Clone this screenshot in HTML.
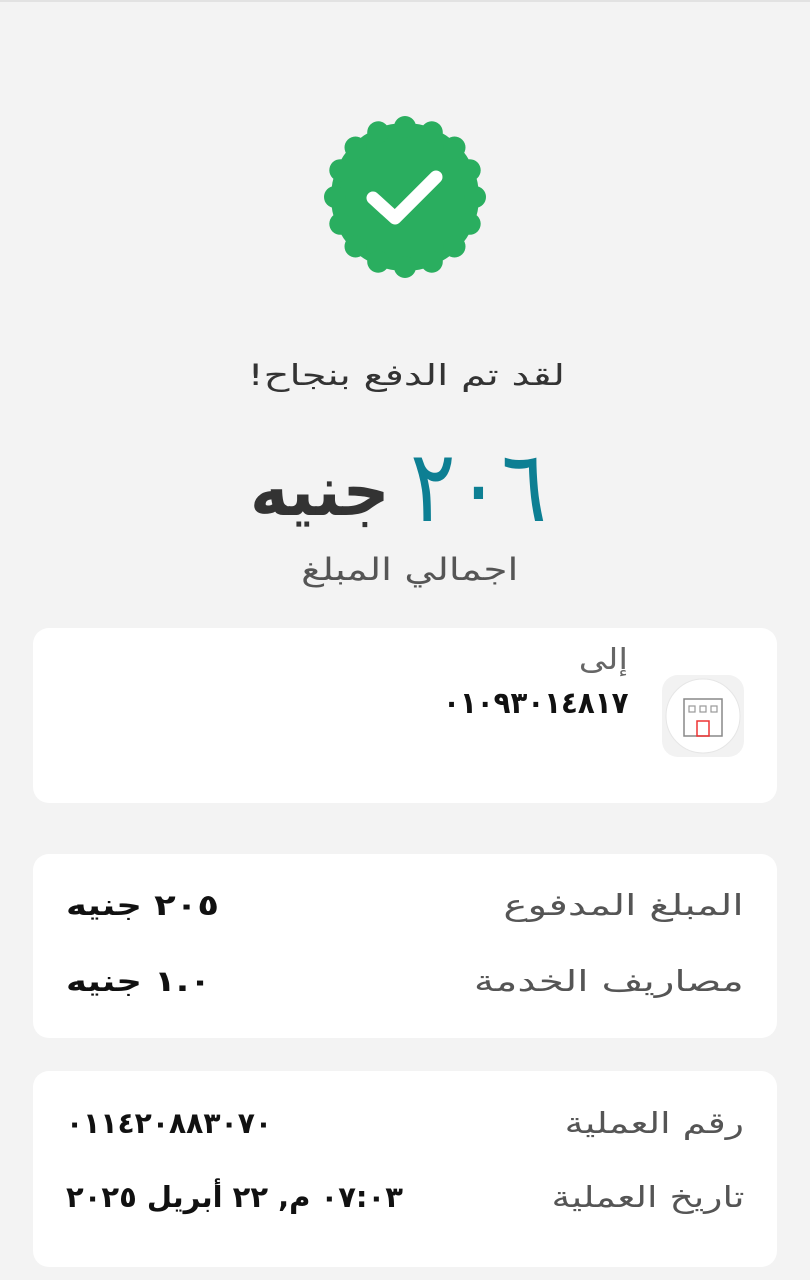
<!DOCTYPE html>
<html><head><meta charset="utf-8"><style>
body{margin:0;width:810px;height:1280px;background:#f3f3f3;font-family:"DejaVu Sans","Liberation Sans",sans-serif;position:relative;overflow:hidden;border-top:2px solid #e2e2e2;box-sizing:border-box}
.a{position:absolute;white-space:nowrap;direction:rtl}
.card{position:absolute;left:33px;width:744px;background:#fff;border-radius:16px}
.lbl{color:#555;font-size:29px;transform:scaleX(1.4);transform-origin:right center}
.val{color:#111;font-size:29px;font-weight:bold;transform:scaleX(1.22);transform-origin:left center}
</style></head><body>
<svg class="a" style="left:320px;top:110px" width="170" height="170" viewBox="0 0 170 170">
<g fill="#2aae5f">
<circle cx="85" cy="85" r="74"/>
<circle cx="85" cy="15" r="11"/><circle cx="111.8" cy="20.3" r="11"/><circle cx="134.5" cy="35.5" r="11"/><circle cx="149.7" cy="58.2" r="11"/><circle cx="155" cy="85" r="11"/><circle cx="149.7" cy="111.8" r="11"/><circle cx="134.5" cy="134.5" r="11"/><circle cx="111.8" cy="149.7" r="11"/><circle cx="85" cy="155" r="11"/><circle cx="58.2" cy="149.7" r="11"/><circle cx="35.5" cy="134.5" r="11"/><circle cx="20.3" cy="111.8" r="11"/><circle cx="15" cy="85" r="11"/><circle cx="20.3" cy="58.2" r="11"/><circle cx="35.5" cy="35.5" r="11"/><circle cx="58.2" cy="20.3" r="11"/>
</g>
<polyline points="53,86 75,106 116,65" fill="none" stroke="#fff" stroke-width="13" stroke-linecap="round" stroke-linejoin="round"/>
</svg>
<div class="a" style="right:245px;top:356px;font-size:29px;color:#333;transform:scaleX(1.38);transform-origin:right center">لقد تم الدفع بنجاح!</div>
<div class="a" style="left:250px;top:448px;font-size:70px;font-weight:bold;color:#333;transform:scaleX(0.93);transform-origin:left center">جنيه</div>
<div class="a" style="left:410px;top:430px;font-size:100px;color:#0d7f93;line-height:1.1;transform:scaleX(0.85);transform-origin:left center">٢٠٦</div>
<div class="a" style="right:292px;top:550px;font-size:31px;color:#555;transform:scaleX(1.26);transform-origin:right center">اجمالي المبلغ</div>

<div class="card" style="top:626px;height:175px"></div>
<div class="a" style="right:182px;top:640px;font-size:29px;color:#666;transform:scaleX(1.2);transform-origin:right center">إلى</div>
<div class="a" style="right:182px;top:684px;font-size:30px;font-weight:bold;color:#111;transform:scaleX(0.92);transform-origin:right center">٠١٠٩٣٠١٤٨١٧</div>
<div class="a" style="left:662px;top:673px;width:82px;height:82px;background:#f2f2f2;border-radius:16px"></div>
<svg class="a" style="left:664px;top:675px" width="78" height="78" viewBox="0 0 78 78">
<circle cx="39" cy="39" r="37" fill="#fff" stroke="#e6e6e6"/>
<rect x="20" y="22" width="38" height="37" fill="none" stroke="#888" stroke-width="1.5"/>
<rect x="25" y="29" width="6" height="6" fill="none" stroke="#999" stroke-width="1.2"/>
<rect x="36" y="29" width="6" height="6" fill="none" stroke="#999" stroke-width="1.2"/>
<rect x="47" y="29" width="6" height="6" fill="none" stroke="#999" stroke-width="1.2"/>
<rect x="33" y="44" width="12" height="15" fill="none" stroke="#e33" stroke-width="1.5"/>
</svg>

<div class="card" style="top:852px;height:184px"></div>
<div class="a lbl" style="right:66px;top:886px">المبلغ المدفوع</div>
<div class="a val" style="left:66px;top:886px">٢٠٥ جنيه</div>
<div class="a lbl" style="right:66px;top:962px">مصاريف الخدمة</div>
<div class="a val" style="left:66px;top:962px">١.٠ جنيه</div>

<div class="card" style="top:1069px;height:196px"></div>
<div class="a lbl" style="right:66px;top:1104px;transform:scaleX(1.3)">رقم العملية</div>
<div class="a val" style="left:66px;top:1104px;direction:ltr;transform:scaleX(0.97)">٠١١٤٢٠٨٨٣٠٧٠</div>
<div class="a lbl" style="right:66px;top:1178px;transform:scaleX(1.3)">تاريخ العملية</div>
<div class="a val" style="left:66px;top:1178px;transform:scaleX(1.0)">٠٧:٠٣ م, ٢٢ أبريل ٢٠٢٥</div>
</body></html>
